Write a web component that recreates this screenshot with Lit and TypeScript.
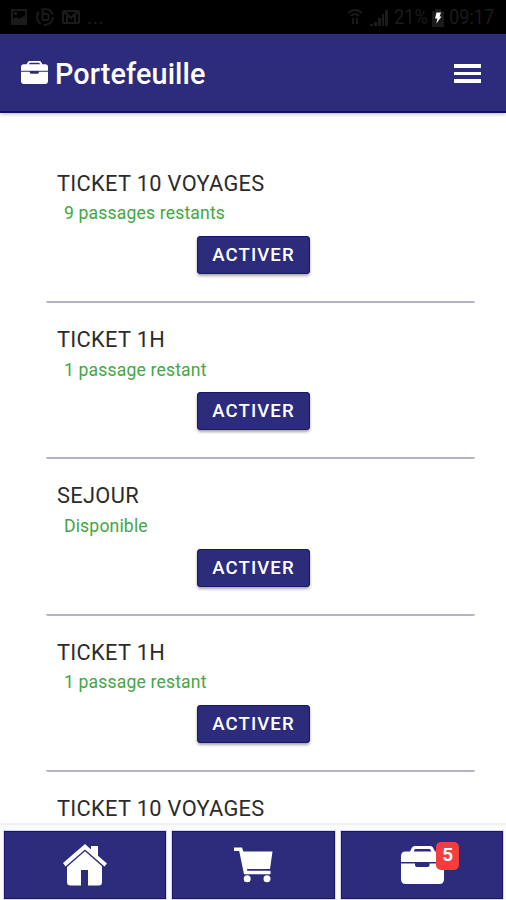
import { LitElement, html, css, svg, nothing } from "lit";
import { customElement, property } from "lit/decorators.js";

interface Ticket {
  title: string;
  status?: string;
}

const TICKETS: Ticket[] = [
  { title: "TICKET 10 VOYAGES", status: "9 passages restants" },
  { title: "TICKET 1H", status: "1 passage restant" },
  { title: "SEJOUR", status: "Disponible" },
  { title: "TICKET 1H", status: "1 passage restant" },
  { title: "TICKET 10 VOYAGES" },
];

const briefcase = svg`
  <path fill-rule="evenodd" d="M0 16V10Q0 5.6 4.5 5.4H9L11 1.6Q11.8 0 13.5 0H29.5Q31.2 0 32 1.6L34 5.4H38.5Q43 5.6 43 10V16ZM12.6 5.4H30.4L29 3H14Z"/>
  <path d="M0 17.6H14V19.2Q14 21 16 21H26.5Q28.5 21 28.5 19.2V17.6H43V33Q43 38 38.5 38H4.5Q0 38 0 33Z"/>`;

@customElement("status-bar")
export class StatusBar extends LitElement {
  static styles = css`
    :host { display: flex; align-items: center; height: 34px; box-sizing: border-box; padding: 0 10px 0 10px; background: #000; color: #1b1b1b; }
    svg { display: block; fill: none; stroke: #1b1b1b; stroke-width: 2; flex: none; }
    .solid { fill: #1b1b1b; stroke: none; }
    .left { display: flex; gap: 8px; align-items: center; }
    .right { display: flex; align-items: center; margin-left: auto; padding-top: 2px; }
    .text { font: 19.5px/24px Roboto, sans-serif; white-space: nowrap; transform: scaleX(.93); transform-origin: 0 50%; }
    .percent { width: 36px; margin-left: 6px; }
    .clock { width: 47px; margin-left: 5px; }
    .battery { margin-left: 2px; }
    .signal { margin-left: 7px; }
    .dots { font: 20px/24px Roboto, sans-serif; letter-spacing: .4px; margin-left: -1px; }
  `;

  render() {
    return html`
      <div class="left">
        <svg width="18" height="18" viewBox="0 0 18 18"><path d="M2 2H16V16H2Z"/><path class="solid" d="M2 16V12L6 9L9 11L14 8L16 11V16ZM4 4H7V7H4Z"/></svg>
        <svg width="18" height="18" viewBox="0 0 18 18"><circle cx="9" cy="9" r="8" stroke-dasharray="14 2.7"/><rect x="6.5" y="6" width="6" height="6" rx="1.5"/><path d="M7 3V7"/></svg>
        <svg width="18" height="18" viewBox="0 0 18 18"><rect x="1" y="3" width="16" height="12" rx="1"/><path d="M5 14V6L9 10L13 6V14M2 4L9 10L16 4"/></svg>
        <span class="dots">...</span>
      </div>
      <div class="right">
        <svg width="16" height="18" viewBox="0 0 16 18"><path d="M1 4Q8-2 15 4M4 7Q8 3 12 7"/><path d="M6 15V9M10 15V9" stroke-width="1.8"/></svg>
        <svg class="signal" width="18" height="18" viewBox="0 0 18 18"><path class="solid" d="M0 17V15H3V17ZM4 17V13H7V17ZM8 17V9H11V17ZM12 17V5H14V17ZM15 17V1H18V17Z"/></svg>
        <span class="text percent">21%</span>
        <svg class="battery" width="12" height="18" viewBox="0 0 12 18"><path class="solid" d="M0 3Q0 2 1 2H3V0H9V2H11Q12 2 12 3V18H0Z"/><path d="M4.5 3.5H9L7.6 7.5H9.5L4.4 14.5L5.3 9.5H3Z" fill="#fff" stroke="none"/></svg>
        <span class="text clock">09:17</span>
      </div>`;
  }
}

@customElement("ticket-item")
export class TicketItem extends LitElement {
  @property({ attribute: false }) ticket!: Ticket;

  static styles = css`
    :host { display: block; height: 156.4px; box-sizing: border-box; padding: 24px 12px 0 11px; border-bottom: 2px solid #b4b3c4; border-radius: 0 0 2px 2px; font-family: Roboto, sans-serif; }
    .title { font-size: 21.8px; line-height: 26px; color: #2b2b2b; white-space: nowrap; font-weight: 400; margin: 0; letter-spacing: .33px; }
    .status { font-size: 17.6px; line-height: 22px; margin: 5.6px 0 0 7px; color: #43a741; letter-spacing: .15px; }
    .action { display: block; width: 113px; height: 38px; margin: 11.6px auto 0 140px; padding: 0; border: 0; border-radius: 4px; background: #2c2b7c; color: #fff; font: 500 18.6px/36px Roboto, sans-serif; letter-spacing: 1.1px; box-shadow: inset 0 0 0 1px #19186d, 0 2px 3px rgba(0,0,0,.35); }
  `;

  render() {
    return html`
      <h2 class="title">${this.ticket.title}</h2>
      ${this.ticket.status
        ? html`<div class="status">${this.ticket.status}</div>
            <button class="action">ACTIVER</button>`
        : nothing}`;
  }
}

@customElement("app-root")
export class AppRoot extends LitElement {
  static styles = css`
    :host { display: flex; flex-direction: column; width: 100%; height: 100vh; overflow: hidden; background: #fff; font-family: Roboto, sans-serif; }
    .header { flex: none; display: flex; align-items: center; height: 79px; box-sizing: border-box; padding: 2px 25px 0 21px; background: #2c2b7c; border-bottom: 2px solid #13106a; color: #fff; box-shadow: 0 1px 4px rgba(0,0,0,.3); }
    .header svg, .nav svg { display: block; fill: #fff; }
    .case { margin-top: -3px; }
    .heading { margin: 0 0 0 7px; font-size: 28.8px; line-height: 34px; font-weight: 500; letter-spacing: .12px; }
    .menu { margin-left: auto; display: flex; flex-direction: column; gap: 3.2px; }
    .bar { width: 27px; height: 3.9px; background: #fff; }
    .list { flex: 1; min-height: 0; overflow: hidden; padding: 33.6px 31px 0 46px; }
    .nav { flex: none; display: grid; grid-template-columns: repeat(3, 1fr); gap: 6px; height: 77px; box-sizing: border-box; padding: 6px 3px 1px 4px; border-top: 2px solid #f1f1f1; background: #fbfbfd; }
    .tab { display: flex; align-items: center; justify-content: center; background: #2c2b7c; box-shadow: inset 0 0 0 1px #17146c; border: 1px solid #d9d8ec; margin: -1px; }
    .wrap { position: relative; left: 1px; }
    .badge { position: absolute; left: 35px; top: -4px; width: 23px; height: 28px; border-radius: 5px; background: #f53d3d; color: #fff; font-size: 19px; line-height: 26px; font-weight: 700; text-align: center; }
  `;

  render() {
    return html`
      <status-bar></status-bar>
      <header class="header">
        <svg class="case" width="27" height="23" viewBox="0 0 43 38" preserveAspectRatio="none">${briefcase}</svg>
        <h1 class="heading">Portefeuille</h1>
        <div class="menu"><div class="bar"></div><div class="bar"></div><div class="bar"></div></div>
      </header>
      <main class="list">
        ${TICKETS.map((t) => html`<ticket-item .ticket=${t}></ticket-item>`)}
      </main>
      <nav class="nav">
        <div class="tab">
          <svg width="44" height="42" viewBox="0 0 44 42">
            <path d="M0 19L22 0L28 5.4V2H35V11.8L44 19.5L41.5 22.6L22 5.4L2.5 22.6Z"/>
            <path d="M4 23L22 7.2L39 22.3V38Q39 41.5 36 41.5H25V26H18V41.5H7.5Q4 41.5 4 38Z"/>
          </svg>
        </div>
        <div class="tab">
          <svg width="39" height="36" viewBox="0 0 39 36">
            <path d="M0 .5H8L9.4 4.5H38.5L36 22H13L13.3 23.8H36.5V27.3H10L5.2 4H0Z"/>
            <circle cx="13.2" cy="31.8" r="3.5"/><circle cx="33" cy="31.8" r="3.5"/>
          </svg>
        </div>
        <div class="tab">
          <div class="wrap">
            <svg width="43" height="38" viewBox="0 0 43 38">${briefcase}</svg>
            <span class="badge">5</span>
          </div>
        </div>
      </nav>`;
  }
}
